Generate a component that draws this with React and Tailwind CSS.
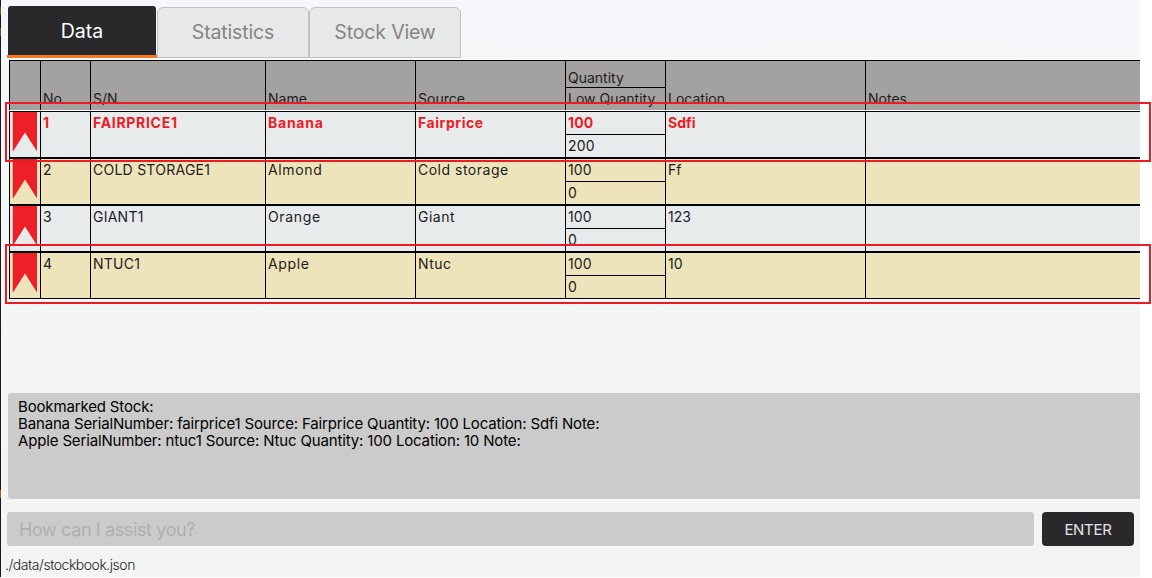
const COLUMNS = 'grid grid-cols-[31px_50px_175px_150px_150px_100px_200px_275px]';

const ROWS = [
  { no: '1', sn: 'FAIRPRICE1', name: 'Banana', source: 'Fairprice', qty: '100', low: '200', location: 'Sdfi', alert: true },
  { no: '2', sn: 'COLD STORAGE1', name: 'Almond', source: 'Cold storage', qty: '100', low: '0', location: 'Ff' },
  { no: '3', sn: 'GIANT1', name: 'Orange', source: 'Giant', qty: '100', low: '0', location: '123' },
  { no: '4', sn: 'NTUC1', name: 'Apple', source: 'Ntuc', qty: '100', low: '0', location: '10' },
];

function Bookmark() {
  return (
    <svg className="ml-[2px] block h-[41px] w-[26px]" viewBox="0 0 26 41">
      <path d="M1 0H25V39.5L13 20.5L1 39.5Z" fill="#ed2028" />
      <path d="M0.5 0V39" stroke="#ed2028" strokeOpacity="0.3" fill="none" />
    </svg>
  );
}

function HeaderCell({ children }) {
  return (
    <div className="flex items-end border-l border-black pb-[1px] pl-[2px] text-[14px] leading-[20px]">
      {children}
    </div>
  );
}

function Cell({ children, className = '' }) {
  return <div className={`whitespace-nowrap border-l border-black pl-[2px] pt-[1px] ${className}`}>{children}</div>;
}

function Row({ row, shaded }) {
  const tone = row.alert ? 'font-bold text-[#ed1c24]' : 'text-[#1c1c1c]';
  const wide = row.alert ? 'tracking-[0.75px]' : 'tracking-[0.65px]';
  const serial = row.alert ? 'tracking-[0.7px]' : 'tracking-[0.25px]';
  const source = row.alert ? 'tracking-[0.55px]' : 'tracking-[0.5px]';
  return (
    <div className={`${COLUMNS} h-[47px] border-y border-black text-[14px] leading-[20px] ${tone} ${shaded ? 'bg-[#eee4bb]' : 'bg-[#e7ebec]'}`}>
      <div className="border-l border-black">
        <Bookmark />
      </div>
      <Cell>{row.no}</Cell>
      <Cell className={serial}>{row.sn}</Cell>
      <Cell className={wide}>{row.name}</Cell>
      <Cell className={source}>{row.source}</Cell>
      <div className="border-l border-black">
        <div className="h-[23px] border-b border-black pl-[2px] pt-[1px] tracking-[0.1px]">{row.qty}</div>
        <div className="pl-[2px] pt-[1px] font-normal tracking-[0.25px] text-[#1c1c1c]">{row.low}</div>
      </div>
      <Cell>{row.location}</Cell>
      <Cell />
    </div>
  );
}

function Tab({ children }) {
  return (
    <div className="mt-[7px] flex h-[51px] w-[152px] items-center justify-center rounded-t-[6px] border border-[#bfc0c0] bg-[#e7e9e8] text-[19.5px] tracking-[-0.15px] text-[#858585]">
      {children}
    </div>
  );
}

export default function App() {
  return (
    <div className="relative flex h-[578px] w-[1152px] overflow-hidden bg-white font-['Inter','Liberation_Sans',sans-serif]">
      <div className="h-[577px] w-px bg-[linear-gradient(#191820_0_7px,#7a4a20_7px_15px,#191820_15px_28px,#7a4a20_28px_36px,#191820_36px_490px,#a65a22_490px_498px,#191820_498px)]" />
      <div className="flex h-[577px] w-[1139px] flex-col overflow-hidden bg-linear-to-b from-[#f6f7fa] via-[#f4f6f5] via-60% to-[#f3f5f4]">
        <div className="flex h-[60px] shrink-0 pl-[6px]">
          <div className="mt-[6px] flex h-[52px] w-[150px] flex-col">
            <div className="mx-[1px] flex h-[49px] items-center justify-center rounded-t-[3px] bg-[#29292b] pt-[2px] text-[19.5px] text-white">
              Data
            </div>
            <div className="h-[3px] bg-[#f57a1f]" />
          </div>
          <Tab>Statistics</Tab>
          <Tab>Stock View</Tab>
        </div>

        <div className="ml-[8px] shrink-0">
          <div className={`${COLUMNS} h-[50px] border-t border-black bg-[#a4a1a1] text-[#1c1c1c]`}>
            <div className="border-l border-black" />
            <HeaderCell>No</HeaderCell>
            <HeaderCell>S/N</HeaderCell>
            <HeaderCell>Name</HeaderCell>
            <HeaderCell>Source</HeaderCell>
            <div className="border-l border-black text-[14px] leading-[20px]">
              <div className="h-[27px] border-b border-black pl-[2px] pt-[7px]">Quantity</div>
              <div className="pl-[2px] pt-[1px]">Low Quantity</div>
            </div>
            <HeaderCell>Location</HeaderCell>
            <HeaderCell>Notes</HeaderCell>
          </div>
          <div className="h-px bg-white" />
          {ROWS.map((row, i) => (
            <Row key={row.no} row={row} shaded={i % 2 === 1} />
          ))}
        </div>

        <div className="ml-[7px] mt-[94px] h-[106px] shrink-0 rounded-l-[3px] bg-[#cbcbcb] pl-[10px] pt-[5px] text-[15px] leading-[17px] tracking-[-0.155px] text-black">
          <div>Bookmarked Stock:</div>
          <div>Banana SerialNumber: fairprice1 Source: Fairprice Quantity: 100 Location: Sdfi Note:</div>
          <div>Apple SerialNumber: ntuc1 Source: Ntuc Quantity: 100 Location: 10 Note:</div>
        </div>

        <div className="mt-[13px] flex h-[34px] shrink-0 gap-[8px] pl-[6px]">
          <div className="flex w-[1027px] items-center rounded-[3px] bg-[#cbcbcb] pl-[12px] text-[18px] tracking-[-0.38px] text-[#b0b0b0]">
            How can I assist you?
          </div>
          <div className="flex w-[92px] items-center justify-center rounded-[4px] bg-[#29292b] pt-[2px] text-[15px] tracking-[-0.3px] text-[#e4e4e4]">
            ENTER
          </div>
        </div>
        <div className="mt-[9px] pl-[4px] text-[14px] font-light leading-[20px] tracking-[-0.48px] text-[#1c1c1c]">./data/stockbook.json</div>
      </div>

      <div className="absolute left-[5px] top-[102px] h-[60px] w-[1146px] border-2 border-[#ed1c24]" />
      <div className="absolute left-[5px] top-[244px] h-[60px] w-[1146px] border-2 border-[#ed1c24]" />
    </div>
  );
}
